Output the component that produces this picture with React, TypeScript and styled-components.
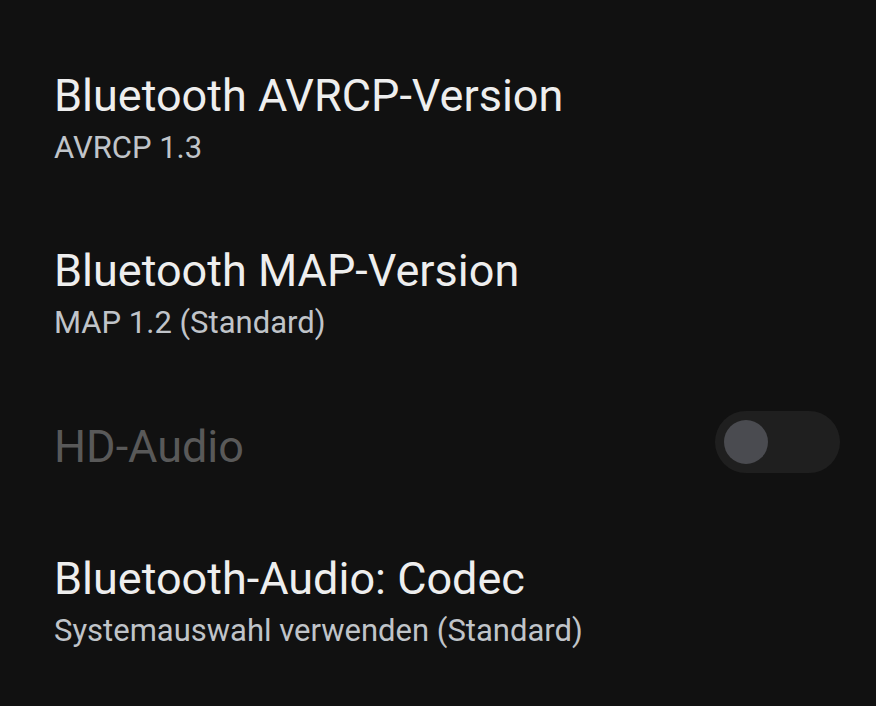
import React from 'react'
import styled, { createGlobalStyle } from 'styled-components'

const GlobalStyle = createGlobalStyle`
  html, body {
    margin: 0;
    padding: 0;
    background: #111111;
  }
  body {
    font-family: Roboto, "Noto Sans", sans-serif;
    -webkit-font-smoothing: antialiased;
  }
`

const Page = styled.div`
  width: 876px;
  height: 706px;
  background: #111111;
  overflow: hidden;
  display: flex;
  flex-direction: column;
  padding-top: 68px;
  box-sizing: border-box;
`

const Row = styled.div<{ $height: number }>`
  flex-shrink: 0;
  height: ${(p) => p.$height}px;
  display: flex;
  align-items: flex-start;
  justify-content: space-between;
  padding: 0 36px 0 54px;
`

const Texts = styled.div`
  display: flex;
  flex-direction: column;
`

const Title = styled.div<{ $disabled?: boolean }>`
  font-size: 45px;
  line-height: 56px;
  color: ${(p) => (p.$disabled ? '#595959' : '#eeeeee')};
`

const Summary = styled.div`
  font-size: 31px;
  line-height: 48px;
  color: #c0c4c9;
`

const Track = styled.div`
  width: 125px;
  height: 62px;
  border-radius: 31px;
  background: #1f1f1f;
  display: flex;
  align-items: center;
  padding-left: 9px;
  box-sizing: border-box;
  margin-top: -8px;
`

const Knob = styled.div`
  width: 44px;
  height: 44px;
  border-radius: 50%;
  background: #4a4b50;
`

const items = [
  { title: 'Bluetooth AVRCP-Version', summary: 'AVRCP 1.3' },
  { title: 'Bluetooth MAP-Version', summary: 'MAP 1.2 (Standard)' },
]

export default function App() {
  return (
    <Page>
      <GlobalStyle />
      {items.map((it, i) => (
        <Row key={it.title} $height={i === 0 ? 175 : 176}>
          <Texts>
            <Title>{it.title}</Title>
            <Summary>{it.summary}</Summary>
          </Texts>
        </Row>
      ))}
      <Row $height={132}>
        <Title $disabled>HD-Audio</Title>
        <Track>
          <Knob />
        </Track>
      </Row>
      <Row $height={176}>
        <Texts>
          <Title>Bluetooth-Audio: Codec</Title>
          <Summary>Systemauswahl verwenden (Standard)</Summary>
        </Texts>
      </Row>
    </Page>
  )
}
